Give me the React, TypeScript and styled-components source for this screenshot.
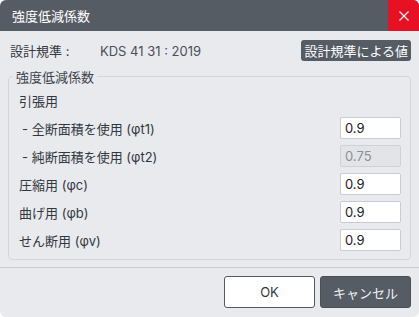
import React, { useState } from 'react';
import styled, { createGlobalStyle } from 'styled-components';

const GlobalStyle = createGlobalStyle`
    html, body {
        margin : 0;
        padding : 0;
        background : #ffffff;
    }
    body {
        font-family : Inter, "Noto Sans CJK JP", sans-serif;
        font-size : 13px;
        color : #333840;
    }
`;

const Window = styled.div`
    width : 419px;
    height : 317px;
    box-sizing : border-box;
    background : #e9eaee;
    border-radius : 6px;
    overflow : hidden;
    display : flex;
    flex-direction : column;
`;

const TitleBar = styled.div`
    height : 31px;
    flex : none;
    background : #565c64;
    display : flex;
    align-items : center;
    & > .title {
        flex : 1;
        padding-left : 12px;
        color : #ffffff;
        font-size : 13px;
    }
`;

const CloseButton = styled.button`
    width : 31px;
    height : 31px;
    border : none;
    padding : 0;
    background : #e81123;
    display : flex;
    align-items : center;
    justify-content : center;
`;

const Body = styled.div`
    flex : 1;
    padding : 9px 8px 0 8px;
    display : flex;
    flex-direction : column;
`;

const HeaderRow = styled.div`
    display : flex;
    align-items : center;
    height : 21px;
    padding-left : 2px;
    & > .label {
        width : 90px;
    }
    & > .value {
        flex : 1;
        color : #4a4f57;
    }
`;

const SmallDarkButton = styled.button`
    height : 21px;
    padding : 0 3px;
    border : none;
    border-radius : 3px;
    background : #565c64;
    color : #ffffff;
    font-family : inherit;
    font-size : 13px;
`;

const Group = styled.fieldset`
    margin : 6px 0 0 0;
    padding : 0 9px 5px 10px;
    border : 1px solid #d3d5d9;
    border-radius : 4px;
    & > legend {
        padding : 0 3px;
        margin-left : -6px;
        color : #40454c;
    }
`;

const SectionTitle = styled.div`
    height : 28px;
    display : flex;
    align-items : center;
`;

const Row = styled.div<{ $indent?: boolean }>`
    height : 28px;
    display : flex;
    align-items : center;
    & > .label {
        flex : 1;
        padding-left : ${({ $indent }) => ($indent ? '3px' : '0')};
    }
`;

const ValueInput = styled.input`
    width : 61px;
    height : 22px;
    box-sizing : border-box;
    border : 1px solid #c9cbcf;
    border-radius : 2px;
    padding : 0 4px;
    font-family : Inter, sans-serif;
    font-size : 13px;
    color : #222222;
    background : #ffffff;
    &:disabled {
        background : #e3e4e7;
        color : #8c8f94;
        border-color : #cfd1d4;
    }
`;

const Footer = styled.div`
    margin : 7px -8px 0 -8px;
    border-top : 1px solid #c9cacd;
    padding : 8px 8px 0 8px;
    display : flex;
    justify-content : flex-end;
    gap : 5px;
`;

const DialogButton = styled.button<{ $primary?: boolean }>`
    width : 91px;
    height : 32px;
    box-sizing : border-box;
    border-radius : 3px;
    border : 1px solid ${({ $primary }) => ($primary ? '#4a5058' : '#54595f')};
    background : ${({ $primary }) => ($primary ? '#565c64' : '#ffffff')};
    color : ${({ $primary }) => ($primary ? '#eef0f2' : '#333840')};
    font-family : Inter, "Noto Sans CJK JP", sans-serif;
    font-size : 13px;
`;

const rows = [
    { label: '- 全断面積を使用 (φt1)', value: '0.9', indent: true },
    { label: '- 純断面積を使用 (φt2)', value: '0.75', indent: true, disabled: true },
    { label: '圧縮用 (φc)', value: '0.9' },
    { label: '曲げ用 (φb)', value: '0.9' },
    { label: 'せん断用 (φv)', value: '0.9' },
];

export default function App() {
    const [values, setValues] = useState(rows.map(r => r.value));
    return (
        <Window>
            <GlobalStyle />
            <TitleBar>
                <span className='title'>強度低減係数</span>
                <CloseButton>
                    <svg width='10' height='10' viewBox='0 0 10 10'>
                        <path d='M0.5 0.5 L9.5 9.5 M9.5 0.5 L0.5 9.5' stroke='#ffffff' strokeWidth='1.1' />
                    </svg>
                </CloseButton>
            </TitleBar>
            <Body>
                <HeaderRow>
                    <span className='label'>設計規準 :</span>
                    <span className='value'>KDS 41 31 : 2019</span>
                    <SmallDarkButton>設計規準による値</SmallDarkButton>
                </HeaderRow>
                <Group>
                    <legend>強度低減係数</legend>
                    <SectionTitle>引張用</SectionTitle>
                    {rows.map((r, i) => (
                        <Row key={r.label} $indent={r.indent}>
                            <span className='label'>{r.label}</span>
                            <ValueInput
                                value={values[i]}
                                disabled={r.disabled}
                                onChange={e => {
                                    const next = [...values];
                                    next[i] = e.target.value;
                                    setValues(next);
                                }}
                            />
                        </Row>
                    ))}
                </Group>
                <Footer>
                    <DialogButton>OK</DialogButton>
                    <DialogButton $primary>キャンセル</DialogButton>
                </Footer>
            </Body>
        </Window>
    );
}
